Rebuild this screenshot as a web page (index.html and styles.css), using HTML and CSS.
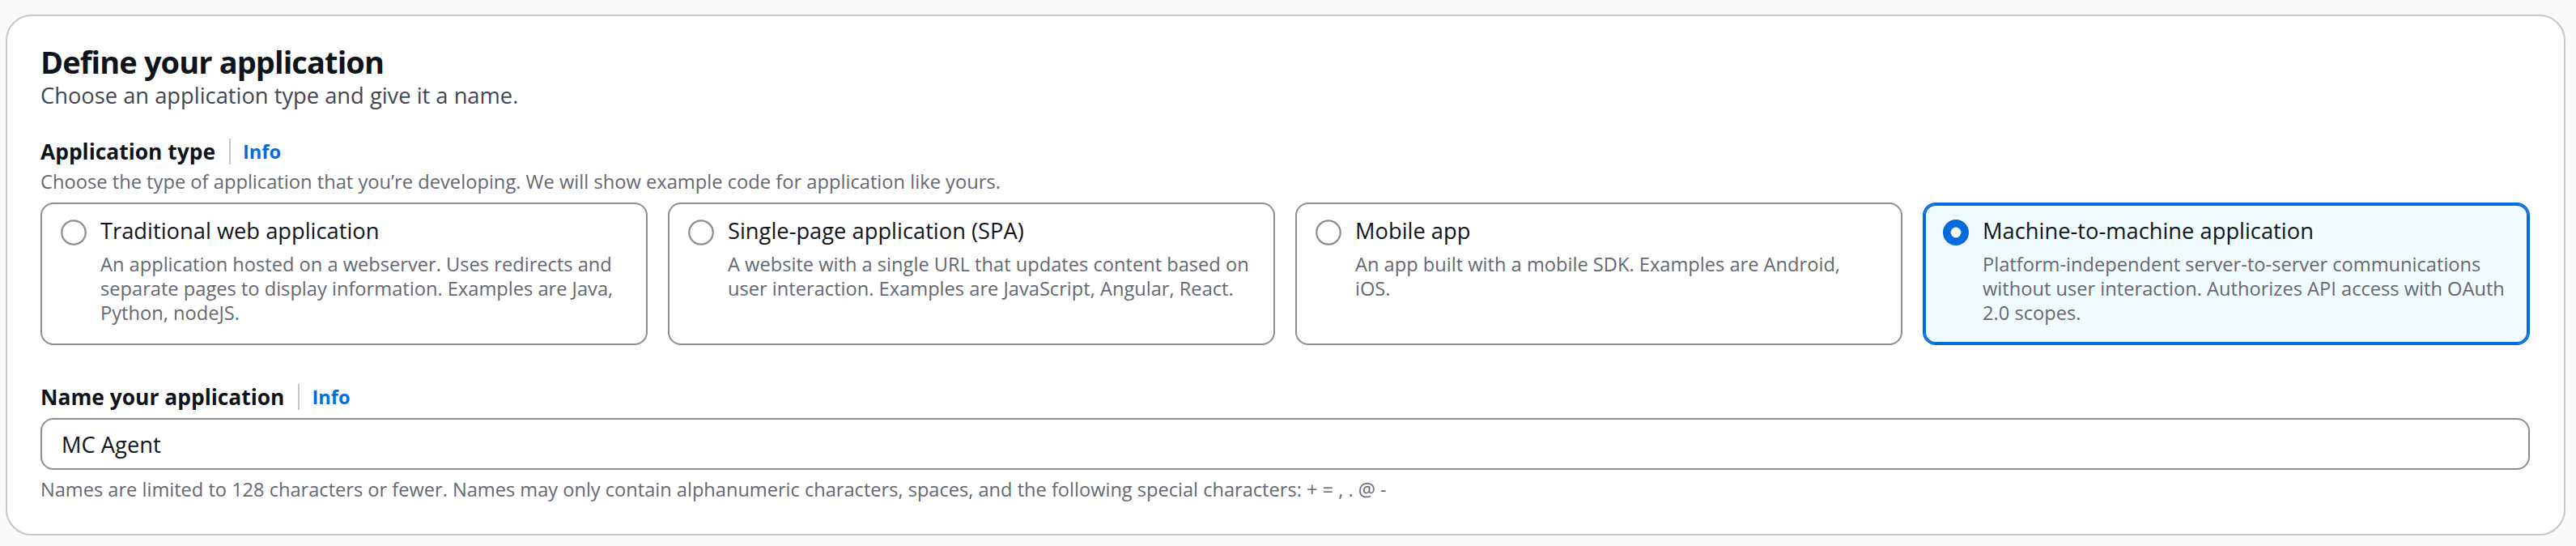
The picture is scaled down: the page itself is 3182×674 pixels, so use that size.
FILE: index.html
```html
<!DOCTYPE html>
<html lang="en">
<head>
<meta charset="utf-8">
<title>Define your application</title>
<link rel="stylesheet" href="styles.css">
</head>
<body>
<section class="container">
  <h2 class="heading">Define your application</h2>
  <p class="subtitle">Choose an application type and give it a name.</p>

  <div class="field field-type">
    <div class="label-row">
      <span class="label">Application type</span>
      <a class="info" href="#">Info</a>
    </div>
    <p class="field-desc">Choose the type of application that you’re developing. We will show example code for application like yours.</p>
    <div class="tiles">
      <div class="tile">
        <svg class="radio" viewBox="0 0 100 100"><circle cx="50" cy="50" r="46" fill="#fff" stroke="#8c8c94" stroke-width="7"/></svg>
        <div class="tile-text">
          <div class="tile-title">Traditional web application</div>
          <div class="tile-desc">An application hosted on a webserver. Uses redirects and separate pages to display information. Examples are Java, Python, nodeJS.</div>
        </div>
      </div>
      <div class="tile">
        <svg class="radio" viewBox="0 0 100 100"><circle cx="50" cy="50" r="46" fill="#fff" stroke="#8c8c94" stroke-width="7"/></svg>
        <div class="tile-text">
          <div class="tile-title">Single-page application (SPA)</div>
          <div class="tile-desc">A website with a single URL that updates content based on user interaction. Examples are JavaScript, Angular, React.</div>
        </div>
      </div>
      <div class="tile">
        <svg class="radio" viewBox="0 0 100 100"><circle cx="50" cy="50" r="46" fill="#fff" stroke="#8c8c94" stroke-width="7"/></svg>
        <div class="tile-text">
          <div class="tile-title">Mobile app</div>
          <div class="tile-desc">An app built with a mobile SDK. Examples are Android,<br>iOS.</div>
        </div>
      </div>
      <div class="tile tile-selected">
        <svg class="radio" viewBox="0 0 100 100"><circle cx="50" cy="50" r="35" fill="#fff" stroke="#006ce0" stroke-width="30"/></svg>
        <div class="tile-text">
          <div class="tile-title">Machine-to-machine application</div>
          <div class="tile-desc">Platform-independent server-to-server communications without user interaction. Authorizes API access with OAuth 2.0 scopes.</div>
        </div>
      </div>
    </div>
  </div>

  <div class="field field-name">
    <div class="label-row">
      <span class="label">Name your application</span>
      <a class="info" href="#">Info</a>
    </div>
    <input class="text-input" type="text" value="MC Agent">
    <p class="constraint">Names are limited to 128 characters or fewer. Names may only contain alphanumeric characters, spaces, and the following special characters: + = , . @ -</p>
  </div>
</section>
</body>
</html>
```
FILE: styles.css
```css
* { box-sizing: border-box; }

html, body {
  margin: 0;
  padding: 0;
  background: #fafafa;
  font-family: "Open Sans", "Noto Sans", "Liberation Sans", sans-serif;
  color: #0f141a;
}

body {
  padding: 18px 13px 12px 7px;
}

.container {
  background: #ffffff;
  border: 2px solid #c6c6cd;
  border-radius: 32px;
  padding: 37px 42px 39px 41px;
}

.heading {
  margin: 0;
  font-size: 38px;
  line-height: 39px;
  font-weight: 700;
  letter-spacing: -0.9px;
  color: #0f141a;
}

.subtitle {
  margin: 2px 0 0;
  font-size: 27.3px;
  line-height: 40px;
  color: #424650;
}

.field-type { margin-top: 29px; }
.field-name { margin-top: 44px; }

.label-row {
  display: flex;
  align-items: center;
  height: 40px;
}

.label {
  font-size: 26.4px;
  line-height: 40px;
  font-weight: 700;
  color: #0f141a;
}

.info {
  margin-left: 17px;
  padding-left: 15px;
  border-left: 2px solid #c6c6cd;
  height: 32px;
  display: flex;
  align-items: center;
  font-size: 23.6px;
  font-weight: 700;
  color: #006ce0;
  text-decoration: none;
}

.field-desc {
  margin: 1px 0 0;
  font-size: 23.7px;
  line-height: 32px;
  color: #656871;
}

.tiles {
  margin-top: 10px;
  display: grid;
  grid-template-columns: repeat(4, 1fr);
  gap: 25px;
}

.tile {
  display: flex;
  align-items: flex-start;
  gap: 17px;
  border: 2px solid #8c8c94;
  border-radius: 16px;
  padding: 13px 23px 23px 23px;
  background: #ffffff;
}

.tile-selected {
  border-color: #006ce0;
  box-shadow: inset 0 0 0 2px #006ce0;
  background: #f0fbff;
}

.radio {
  flex: none;
  width: 32px;
  height: 32px;
  margin-top: 6px;
}

.tile-text { min-width: 0; }

.tile-title {
  font-size: 27.3px;
  line-height: 40px;
  color: #0f141a;
}

.tile-desc {
  margin-top: 6px;
  font-size: 23.65px;
  line-height: 30px;
  color: #656871;
}

.text-input {
  display: block;
  width: 100%;
  height: 64px;
  margin-top: 6px;
  border: 2px solid #8c8c94;
  border-radius: 16px;
  padding: 0 24px;
  font-family: inherit;
  font-size: 27.3px;
  color: #0f141a;
  background: #ffffff;
  outline: none;
}

.constraint {
  margin: 8px 0 0;
  font-size: 23.6px;
  line-height: 32px;
  color: #656871;
}
```
